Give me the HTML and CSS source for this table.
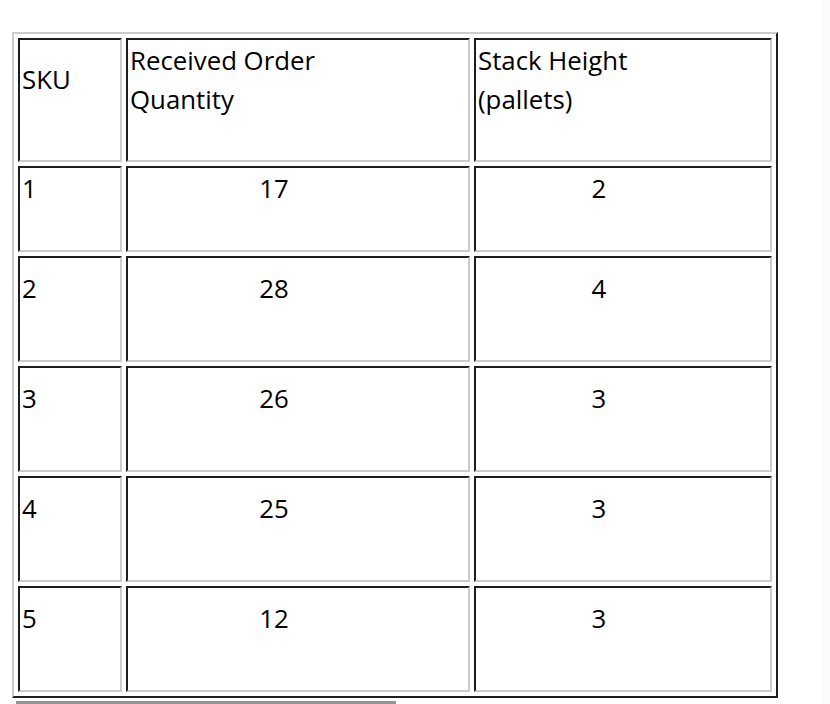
FILE: index.html
```html
<!DOCTYPE html>
<html>
<head>
<meta charset="utf-8">
<link rel="stylesheet" href="styles.css">
</head>
<body>
<div class="page">
  <table class="grid">
    <tr class="head">
      <td class="c1"><p>SKU</p></td>
      <td class="c2"><p>Received Order<br>Quantity</p></td>
      <td class="c3"><p>Stack Height<br>(pallets)</p></td>
    </tr>
    <tr class="first">
      <td class="c1"><p>1</p></td>
      <td class="c2 num"><p>17</p></td>
      <td class="c3 num"><p>2</p></td>
    </tr>
    <tr class="row">
      <td class="c1"><p>2</p></td>
      <td class="c2 num"><p>28</p></td>
      <td class="c3 num"><p>4</p></td>
    </tr>
    <tr class="row">
      <td class="c1"><p>3</p></td>
      <td class="c2 num"><p>26</p></td>
      <td class="c3 num"><p>3</p></td>
    </tr>
    <tr class="row">
      <td class="c1"><p>4</p></td>
      <td class="c2 num"><p>25</p></td>
      <td class="c3 num"><p>3</p></td>
    </tr>
    <tr class="row">
      <td class="c1"><p>5</p></td>
      <td class="c2 num"><p>12</p></td>
      <td class="c3 num"><p>3</p></td>
    </tr>
  </table>
</div>
<div class="hscroll"></div>
<div class="vtrack"></div>
</body>
</html>
```
FILE: styles.css
```css
html, body {
  margin: 0;
  padding: 0;
  background: #ffffff;
}
body {
  font-family: "Open Sans", "Noto Sans", sans-serif;
  color: #000000;
  width: 830px;
  height: 704px;
  overflow: hidden;
}
.page {
  padding: 32px 0 0 12px;
}
.grid {
  border-collapse: separate;
  border-spacing: 4px;
  border: 2px solid;
  border-color: #cccccc #1e1e1e #1e1e1e #cccccc;
  table-layout: fixed;
}
.grid td {
  box-sizing: border-box;
  border: 2px solid;
  border-color: #1e1e1e #cccccc #cccccc #1e1e1e;
  padding: 0 2px;
  vertical-align: middle;
  font-size: 25.8px;
  text-align: left;
}
.grid p {
  margin: 0 0 41px 0;
  line-height: 39px;
  white-space: nowrap;
}
.c1 { width: 104px; }
.c2 { width: 344px; }
.c3 { width: 298px; }
.grid td.num {
  text-align: center;
  padding-right: 50px;
}
.head td { height: 124px; }
.first td { height: 86px; }
.row td { height: 106px; }
.hscroll {
  position: fixed;
  left: 16px;
  top: 701px;
  width: 380px;
  height: 3px;
  background: #959595;
}
.vtrack {
  position: fixed;
  right: 0;
  top: 0;
  width: 8px;
  height: 704px;
  background: #fbfbfb;
}
```
